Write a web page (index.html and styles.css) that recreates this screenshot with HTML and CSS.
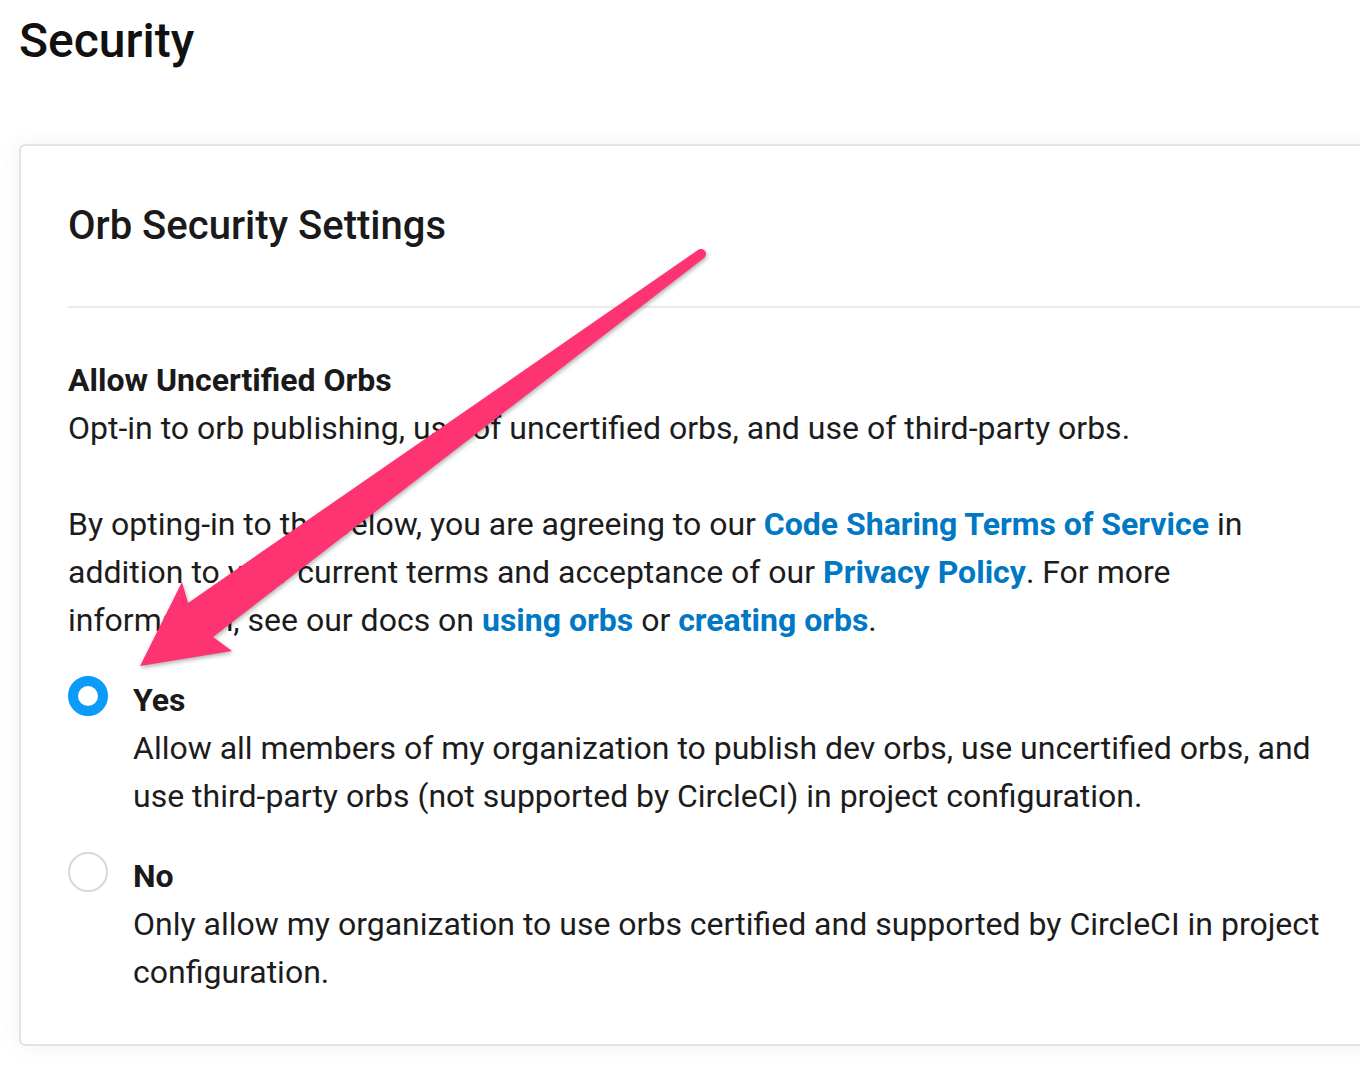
FILE: index.html
```html
<!DOCTYPE html>
<html lang="en">
<head>
<meta charset="utf-8">
<title>Security</title>
<link rel="stylesheet" href="styles.css">
</head>
<body>
<div class="page">
  <h1 class="page-title">Security</h1>
  <section class="card">
    <h2 class="card-title">Orb Security Settings</h2>
    <hr class="divider">
    <div class="setting">
      <h3 class="setting-title">Allow Uncertified Orbs</h3>
      <p class="setting-desc">Opt-in to orb publishing, use of uncertified orbs, and use of third-party orbs.</p>
      <p class="setting-terms">By opting-in to the below, you are agreeing to our <a class="link" href="#">Code Sharing Terms of Service</a> in addition to your current terms and acceptance of our <a class="link" href="#">Privacy Policy</a>. For more information, see our docs on <a class="link" href="#">using orbs</a> or <a class="link" href="#">creating orbs</a>.</p>
      <div class="options">
        <label class="option">
          <span class="radio radio-checked"></span>
          <span class="option-text">
            <span class="option-label">Yes</span>
            <span class="option-desc">Allow all members of my organization to publish dev orbs, use uncertified orbs, and use third-party orbs (not supported by CircleCI) in project configuration.</span>
          </span>
        </label>
        <label class="option">
          <span class="radio"></span>
          <span class="option-text">
            <span class="option-label">No</span>
            <span class="option-desc">Only allow my organization to use orbs certified and supported by CircleCI in project configuration.</span>
          </span>
        </label>
      </div>
    </div>
  </section>
</div>
<svg class="annotation" width="1360" height="1068" viewBox="0 0 1360 1068" aria-hidden="true">
  <path class="arrow" d="M 698 250 L 188 603 L 182 582 L 140 666 L 232 651 L 213 637 L 704 258 A 5 5 0 0 0 698 250 Z"/>
</svg>
</body>
</html>
```
FILE: styles.css
```css
html, body {
  margin: 0;
  padding: 0;
  overflow: hidden;
  background: #ffffff;
}

body {
  font-family: Roboto, "Liberation Sans", Arial, sans-serif;
  color: #1c1c1c;
  width: 1360px;
  height: 1068px;
  position: relative;
}

.page {
  padding: 13px 0 0 19px;
}

.page-title {
  margin: 0;
  font-size: 48px;
  line-height: 56px;
  font-weight: 500;
  color: #111111;
}

.card {
  box-sizing: border-box;
  width: 1361px;
  margin-top: 75px;
  border: 2px solid #e3e3e3;
  border-radius: 6px;
  background: #ffffff;
  box-shadow: 0 0 24px rgba(0, 0, 0, 0.06);
  padding: 48px 49px 48px 47px;
}

.card-title {
  margin: 0;
  font-size: 40px;
  line-height: 64px;
  font-weight: 500;
  color: #1a1a1a;
}

.divider {
  margin: 48px -49px 48px 0;
  border: 0;
  height: 2px;
  background: #ebebeb;
}

.setting-title {
  margin: 0;
  font-size: 32px;
  line-height: 48px;
  font-weight: 700;
  color: #1a1a1a;
}

.setting-desc,
.setting-terms {
  margin: 0;
  font-size: 32px;
  line-height: 48px;
}

.setting-terms {
  margin-top: 48px;
}

.link {
  color: #0078c4;
  font-weight: 700;
  text-decoration: none;
}

.options {
  margin-top: 32px;
  display: flex;
  flex-direction: column;
  gap: 32px;
}

.option {
  display: flex;
  align-items: flex-start;
  gap: 25px;
}

.radio {
  flex: 0 0 auto;
  box-sizing: border-box;
  width: 40px;
  height: 40px;
  border-radius: 50%;
  border: 2px solid #d8d8d8;
  background: #ffffff;
}

.radio-checked {
  border: 10px solid #0a9cf8;
}

.option-text {
  display: flex;
  flex-direction: column;
  font-size: 32px;
  line-height: 48px;
}

.option-label {
  font-weight: 700;
  color: #1a1a1a;
}

.annotation {
  position: absolute;
  left: 0;
  top: 0;
  pointer-events: none;
}

.arrow {
  fill: #fe3372;
  filter: drop-shadow(1px 2px 2px rgba(0, 0, 0, 0.3));
}
```
